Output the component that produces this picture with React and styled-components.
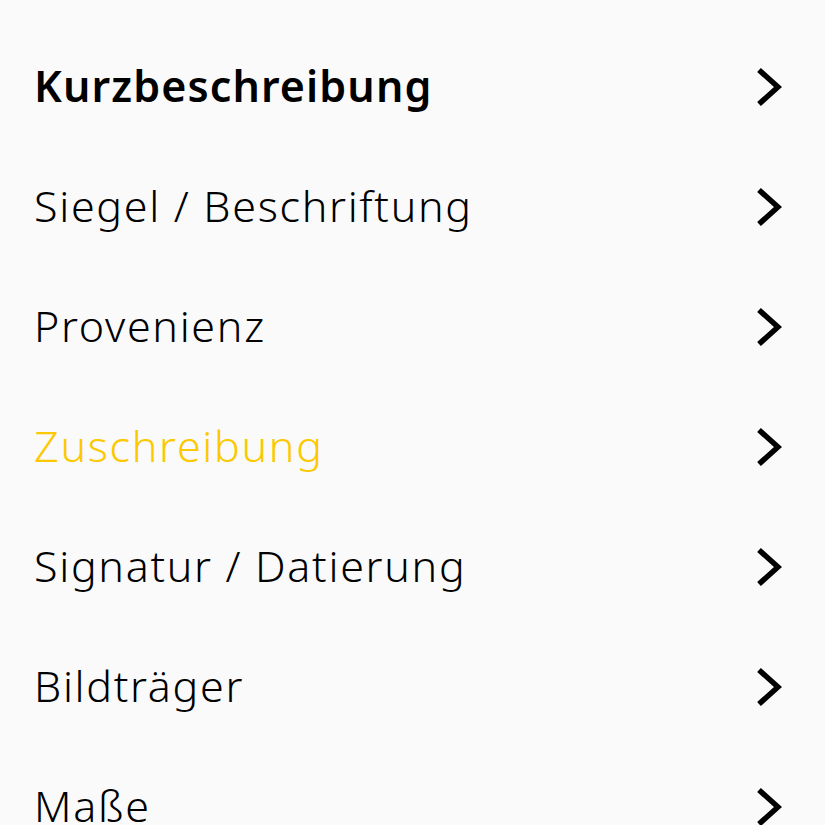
import React from "react";
import styled, { createGlobalStyle } from "styled-components";

const GlobalStyle = createGlobalStyle`
  html, body {
    margin: 0;
    padding: 0;
    background: #fafafa;
  }
  body {
    font-family: "Noto Sans", "Open Sans", sans-serif;
  }
`;

const items = [
  { label: "Kurzbeschreibung", bold: true },
  { label: "Siegel / Beschriftung" },
  { label: "Provenienz" },
  { label: "Zuschreibung", active: true },
  { label: "Signatur / Datierung" },
  { label: "Bildträger" },
  { label: "Maße" },
];

const Menu = styled.nav`
  display: flex;
  flex-direction: column;
  padding: 27px 43px 0 34px;
  height: 825px;
  overflow: hidden;
  box-sizing: border-box;
`;

const Row = styled.a`
  display: flex;
  align-items: center;
  justify-content: space-between;
  height: 120px;
  flex-shrink: 0;
  text-decoration: none;
  cursor: pointer;
`;

const Label = styled.span`
  font-size: 43px;
  line-height: 1;
  padding-bottom: 4px;
  letter-spacing: ${(p) => (p.$bold ? "1.1px" : "1.7px")};
  font-weight: ${(p) => (p.$bold ? 600 : 300)};
  color: ${(p) => (p.$active ? "#fcc800" : "#000")};
`;

const Chevron = () => (
  <svg width="26" height="40" viewBox="0 0 26 40" fill="none">
    <path
      d="M3 3 L22 20 L3 37"
      stroke="#000"
      strokeWidth="5.5"
      strokeLinejoin="miter"
    />
  </svg>
);

export default function App() {
  return (
    <>
      <GlobalStyle />
      <Menu>
        {items.map((it) => (
          <Row key={it.label}>
            <Label $bold={it.bold} $active={it.active}>
              {it.label}
            </Label>
            <Chevron />
          </Row>
        ))}
      </Menu>
    </>
  );
}
